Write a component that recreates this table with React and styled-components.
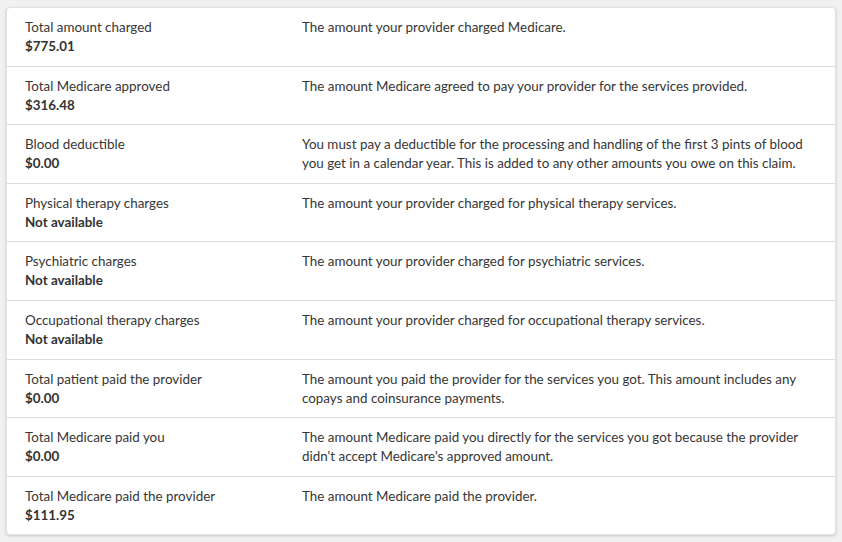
import React from 'react';
import styled, { createGlobalStyle } from 'styled-components';

const GlobalStyle = createGlobalStyle`
  body {
    margin: 0;
    background: #f1f1f1;
    font-family: Lato, "Open Sans", sans-serif;
  }
`;

const rows = [
  { label: 'Total amount charged', value: '$775.01', text: 'The amount your provider charged Medicare.' },
  { label: 'Total Medicare approved', value: '$316.48', text: 'The amount Medicare agreed to pay your provider for the services provided.' },
  { label: 'Blood deductible', value: '$0.00', text: 'You must pay a deductible for the processing and handling of the first 3 pints of blood you get in a calendar year. This is added to any other amounts you owe on this claim.' },
  { label: 'Physical therapy charges', value: 'Not available', text: 'The amount your provider charged for physical therapy services.' },
  { label: 'Psychiatric charges', value: 'Not available', text: 'The amount your provider charged for psychiatric services.' },
  { label: 'Occupational therapy charges', value: 'Not available', text: 'The amount your provider charged for occupational therapy services.' },
  { label: 'Total patient paid the provider', value: '$0.00', text: 'The amount you paid the provider for the services you got. This amount includes any copays and coinsurance payments.' },
  { label: 'Total Medicare paid you', value: '$0.00', text: "The amount Medicare paid you directly for the services you got because the provider didn't accept Medicare's approved amount." },
  { label: 'Total Medicare paid the provider', value: '$111.95', text: 'The amount Medicare paid the provider.' },
];

const Page = styled.div`
  padding: 7px 6px 7px;
`;

const Card = styled.div`
  background: #fff;
  border-radius: 4px;
  border: 1px solid #e2e2e2;
  box-shadow: 0 1px 3px rgba(0, 0, 0, 0.18);
`;

const Row = styled.div`
  display: grid;
  grid-template-columns: 277px 1fr;
  padding: 10px 18px 9.6px 18px;
  border-top: ${(p) => (p.first ? 'none' : '1px solid #dcdcdc')};
  font-size: 13.4px;
  line-height: 19px;
  color: #363636;
`;

const Label = styled.div`
  display: flex;
  flex-direction: column;
`;

const Value = styled.span`
  font-weight: 700;
  color: #333;
`;

const Desc = styled.div``;

export default function App() {
  return (
    <Page>
      <GlobalStyle />
      <Card>
        {rows.map((r, i) => (
          <Row key={r.label} first={i === 0}>
            <Label>
              <span>{r.label}</span>
              <Value>{r.value}</Value>
            </Label>
            <Desc>{r.text}</Desc>
          </Row>
        ))}
      </Card>
    </Page>
  );
}
